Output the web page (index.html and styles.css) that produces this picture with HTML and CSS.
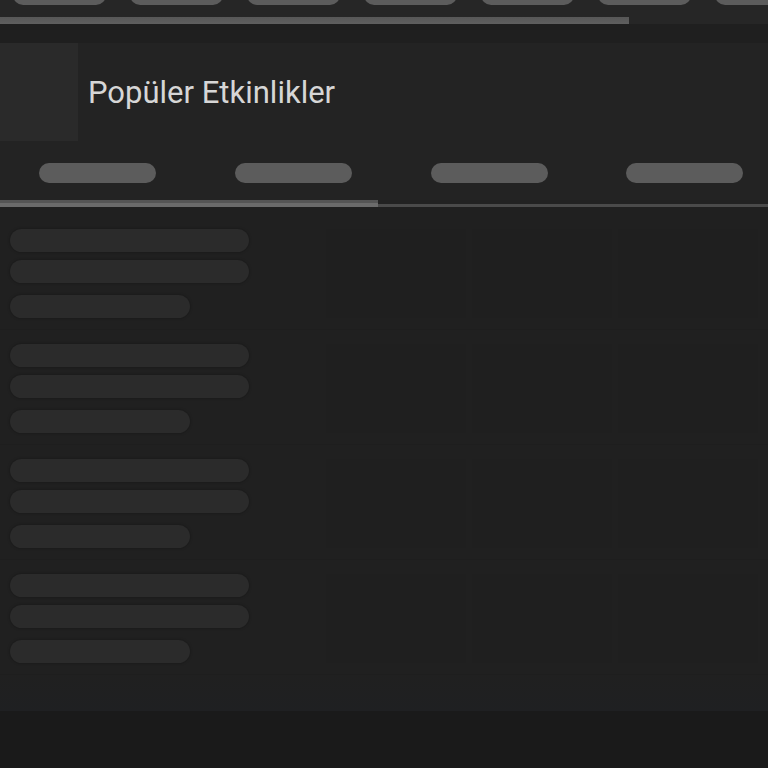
FILE: index.html
```html
<!DOCTYPE html>
<html lang="tr">
<head>
<meta charset="utf-8">
<title>Popüler Etkinlikler</title>
<link rel="stylesheet" href="styles.css">
</head>
<body>
<div class="topbar">
  <div class="top-pills">
    <span class="tpill"></span><span class="tpill"></span><span class="tpill"></span><span class="tpill"></span><span class="tpill"></span><span class="tpill"></span><span class="tpill"></span>
  </div>
  <div class="top-progress"></div>
</div>
<div class="spacer"></div>
<header class="header">
  <div class="thumb"></div>
  <h1 class="title">Popüler Etkinlikler</h1>
</header>
<nav class="tabs">
  <div class="tab-row">
    <div class="tab"><span class="tab-pill"></span></div>
    <div class="tab"><span class="tab-pill"></span></div>
    <div class="tab"><span class="tab-pill"></span></div>
    <div class="tab"><span class="tab-pill"></span></div>
  </div>
  <div class="tab-track"><div class="tab-indicator"></div></div>
</nav>
<main class="content">
  <div class="row">
    <div class="lines"><span class="sk long"></span><span class="sk long"></span><span class="sk short"></span></div>
    <div class="cell"></div><div class="cell"></div><div class="cell"></div>
  </div>
  <div class="row">
    <div class="lines"><span class="sk long"></span><span class="sk long"></span><span class="sk short"></span></div>
    <div class="cell"></div><div class="cell"></div><div class="cell"></div>
  </div>
  <div class="row">
    <div class="lines"><span class="sk long"></span><span class="sk long"></span><span class="sk short"></span></div>
    <div class="cell"></div><div class="cell"></div><div class="cell"></div>
  </div>
  <div class="row">
    <div class="lines"><span class="sk long"></span><span class="sk long"></span><span class="sk short"></span></div>
    <div class="cell"></div><div class="cell"></div><div class="cell"></div>
  </div>
</main>
<div class="fade"></div>
<footer class="bottom"></footer>
</body>
</html>
```
FILE: styles.css
```css
html, body {
  margin: 0;
  padding: 0;
  background: #1a1a1a;
  font-family: Roboto, "Noto Sans", sans-serif;
  overflow: hidden;
}
.topbar {
  height: 24px;
  background: #262626;
  display: flex;
  flex-direction: column;
  justify-content: space-between;
}
.top-pills {
  height: 5px;
  overflow: hidden;
  display: flex;
  align-items: flex-end;
  gap: 24px;
  padding-left: 13px;
}
.tpill {
  flex: 0 0 93px;
  height: 20px;
  border-radius: 10px;
  background: #5c5c5c;
}
.top-progress {
  width: 629px;
  height: 7px;
  background: linear-gradient(#575757, #5f5f5f);
}
.spacer {
  height: 19px;
  background: #1f1f1f;
}
.header {
  height: 98px;
  display: flex;
  align-items: stretch;
  background: #232323;
}
.thumb {
  width: 78px;
  background: #2a2a2a;
}
.title {
  margin: 0;
  padding-left: 10px;
  align-self: center;
  font-size: 31px;
  font-weight: 400;
  color: #d6d6d6;
  line-height: 1;
}
.tabs {
  background: #232323;
  overflow: hidden;
}
.tab-row {
  height: 59px;
  display: flex;
}
.tab {
  flex: 0 0 195.7px;
  display: flex;
  justify-content: center;
  padding-top: 22px;
  box-sizing: border-box;
}
.tab-pill {
  width: 117px;
  height: 20px;
  border-radius: 10px;
  background: #5c5c5c;
}
.tab-track {
  height: 7px;
  background: linear-gradient(#222222 0, #222222 4px, #4a4a4a 4px);
}
.tab-indicator {
  width: 378px;
  height: 7px;
  background: linear-gradient(#555555 0, #555555 3px, #6b6b6b 3px);
}
.content {
  background: #202020;
  padding-top: 8px;
}
.row {
  height: 115px;
  box-sizing: border-box;
  padding: 14px 10px 0 10px;
  display: grid;
  grid-template-columns: 310px 1fr 1fr 1fr;
  column-gap: 6px;
  align-items: start;
  border-bottom: 1px solid #1e1e1e;
}
.lines {
  display: flex;
  flex-direction: column;
}
.sk {
  display: block;
  height: 23px;
  border-radius: 12px;
  background: #2b2b2b;
  box-shadow: 0 0 3px rgba(0, 0, 0, 0.35);
}
.sk.long { width: 239px; }
.sk.short { width: 180px; }
.sk + .sk { margin-top: 8px; }
.sk.short { margin-top: 12px; }
.cell {
  height: 89px;
  background: #1f1f1f;
}
.fade {
  height: 36px;
  background: linear-gradient(#202020, #1f2022);
}
.bottom {
  height: 57px;
  background: #1a1a1a;
}
```
